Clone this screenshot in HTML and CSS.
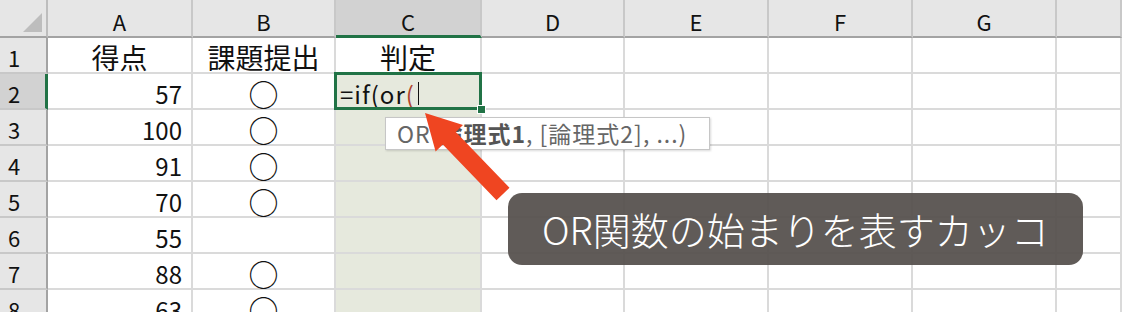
FILE: index.html
```html
<!DOCTYPE html>
<html lang="ja">
<head>
    <meta charset="UTF-8">
    <title>OR関数</title>
    <link rel="stylesheet" href="styles.css">
</head>
<body>
    <div class="sheet">
        <div class="corner"><span class="tri"></span></div>
        <div class="colhead">A</div>
        <div class="colhead">B</div>
        <div class="colhead hsel">C</div>
        <div class="colhead">D</div>
        <div class="colhead">E</div>
        <div class="colhead">F</div>
        <div class="colhead">G</div>
        <div class="colhead"></div>

        <div class="rowhead">1</div>
        <div class="cell center label">得点</div>
        <div class="cell center label">課題提出</div>
        <div class="cell center label">判定</div>
        <div class="cell"></div><div class="cell"></div><div class="cell"></div><div class="cell"></div><div class="cell"></div>

        <div class="rowhead rsel">2</div>
        <div class="cell num">57</div>
        <div class="cell center"><span class="mark">○</span></div>
        <div class="cell sel active"><span class="formula">=if(or<span class="paren">(</span></span><span class="caret"></span></div>
        <div class="cell"></div><div class="cell"></div><div class="cell"></div><div class="cell"></div><div class="cell"></div>

        <div class="rowhead">3</div>
        <div class="cell num">100</div>
        <div class="cell center"><span class="mark">○</span></div>
        <div class="cell sel"></div>
        <div class="cell"></div><div class="cell"></div><div class="cell"></div><div class="cell"></div><div class="cell"></div>

        <div class="rowhead">4</div>
        <div class="cell num">91</div>
        <div class="cell center"><span class="mark">○</span></div>
        <div class="cell sel"></div>
        <div class="cell"></div><div class="cell"></div><div class="cell"></div><div class="cell"></div><div class="cell"></div>

        <div class="rowhead">5</div>
        <div class="cell num">70</div>
        <div class="cell center"><span class="mark">○</span></div>
        <div class="cell sel"></div>
        <div class="cell"></div><div class="cell"></div><div class="cell"></div><div class="cell"></div><div class="cell"></div>

        <div class="rowhead">6</div>
        <div class="cell num">55</div>
        <div class="cell center"></div>
        <div class="cell sel"></div>
        <div class="cell"></div><div class="cell"></div><div class="cell"></div><div class="cell"></div><div class="cell"></div>

        <div class="rowhead">7</div>
        <div class="cell num">88</div>
        <div class="cell center"><span class="mark">○</span></div>
        <div class="cell sel"></div>
        <div class="cell"></div><div class="cell"></div><div class="cell"></div><div class="cell"></div><div class="cell"></div>

        <div class="rowhead">8</div>
        <div class="cell num">63</div>
        <div class="cell center"><span class="mark">○</span></div>
        <div class="cell sel"></div>
        <div class="cell"></div><div class="cell"></div><div class="cell"></div><div class="cell"></div><div class="cell"></div>
    </div>

    <!-- 関数のヒント -->
    <div class="tip">OR(<b>論理式1</b>, [論理式2], ...)</div>

    <svg class="arrow" width="1122" height="312" viewBox="0 0 1122 312">
        <polygon points="425,113 463,125 455.8,132 509.5,187.8 496.5,200.2 442.8,144.5 435.6,151.4" fill="#ef4521"/>
    </svg>

    <div class="caption">OR関数の始まりを表すカッコ</div>
</body>
</html>
```

FILE: styles.css
```css
body {
    margin: 0;
    width: 1122px;
    height: 312px;
    overflow: hidden;
    position: relative;
    background: #fff;
    font-family: "Noto Sans CJK JP", "Liberation Sans", sans-serif;
    color: #111;
}
.sheet {
    display: grid;
    grid-template-columns: 48px 145px 143px 146px 143px 144px 144px 144px 65px;
    grid-template-rows: 38px repeat(8, 36px);
}
.corner {
    background: #e6e6e6;
    border-right: 2px solid #bdbdbd;
    border-bottom: 2px solid #a3a3a3;
    box-sizing: border-box;
    position: relative;
}
.tri {
    position: absolute;
    left: 23px;
    top: 13px;
    width: 0;
    height: 0;
    border-left: 19px solid transparent;
    border-bottom: 19px solid #bdbdbd;
}
.colhead {
    background: #e6e6e6;
    border-right: 2px solid #c8c8c8;
    border-bottom: 2px solid #a3a3a3;
    box-sizing: border-box;
    display: flex;
    align-items: center;
    justify-content: center;
    padding-top: 6px;
    font-size: 22px;
}
.colhead.hsel {
    background: #d2d2d2;
    border-bottom: 3px solid #217346;
}
.rowhead {
    background: #e6e6e6;
    border-right: 2px solid #a3a3a3;
    border-bottom: 2px solid #c8c8c8;
    box-sizing: border-box;
    display: flex;
    align-items: center;
    padding: 4px 0 0 8px;
    font-size: 22px;
}
.rowhead.rsel {
    background: #d2d2d2;
    border-right: 3px solid #217346;
}
.cell {
    border-right: 2px solid #dadada;
    border-bottom: 2px solid #dadada;
    box-sizing: border-box;
    display: flex;
    align-items: center;
    padding: 4px 4px 0 4px;
    font-size: 24px;
    white-space: nowrap;
}
.center {
    justify-content: center;
}
.label {
    font-size: 28px;
    line-height: 1;
}
.num {
    justify-content: flex-end;
    padding-right: 9px;
}
.mark {
    font-size: 30px;
    line-height: 1;
}
.sel {
    background: #e6e9dd;
}
.active {
    position: relative;
}
.active::after {
    content: '';
    position: absolute;
    left: -2px;
    top: -2px;
    right: -2px;
    bottom: -2px;
    border: 3px solid #217346;
}
.active::before {
    content: '';
    position: absolute;
    right: -6px;
    bottom: -6px;
    width: 7px;
    height: 7px;
    background: #217346;
    border: 1px solid #fff;
    z-index: 1;
}
.formula {
    letter-spacing: 1px;
}
.paren {
    color: #b0442c;
}
.caret {
    display: inline-block;
    width: 0;
    height: 23px;
    border-left: 1px solid #111;
    margin-left: 3px;
}
.tip {
    position: absolute;
    left: 385px;
    top: 117px;
    width: 325px;
    height: 33px;
    box-sizing: border-box;
    padding: 1px 0 0 11px;
    background: #fff;
    border: 1px solid #c6c6c6;
    box-shadow: 1px 1px 2px rgba(0, 0, 0, 0.15);
    color: #666;
    font-size: 23px;
    letter-spacing: 1px;
    line-height: 29px;
    white-space: nowrap;
}
.tip b {
    color: #555;
}
.arrow {
    position: absolute;
    left: 0;
    top: 0;
}
.caption {
    position: absolute;
    left: 508px;
    top: 193px;
    width: 575px;
    height: 72px;
    box-sizing: border-box;
    padding-left: 34px;
    border-radius: 14px;
    background: rgba(84, 79, 75, 0.93);
    color: #fff;
    font-size: 38px;
    font-weight: 300;
    line-height: 72px;
    white-space: nowrap;
}
```
